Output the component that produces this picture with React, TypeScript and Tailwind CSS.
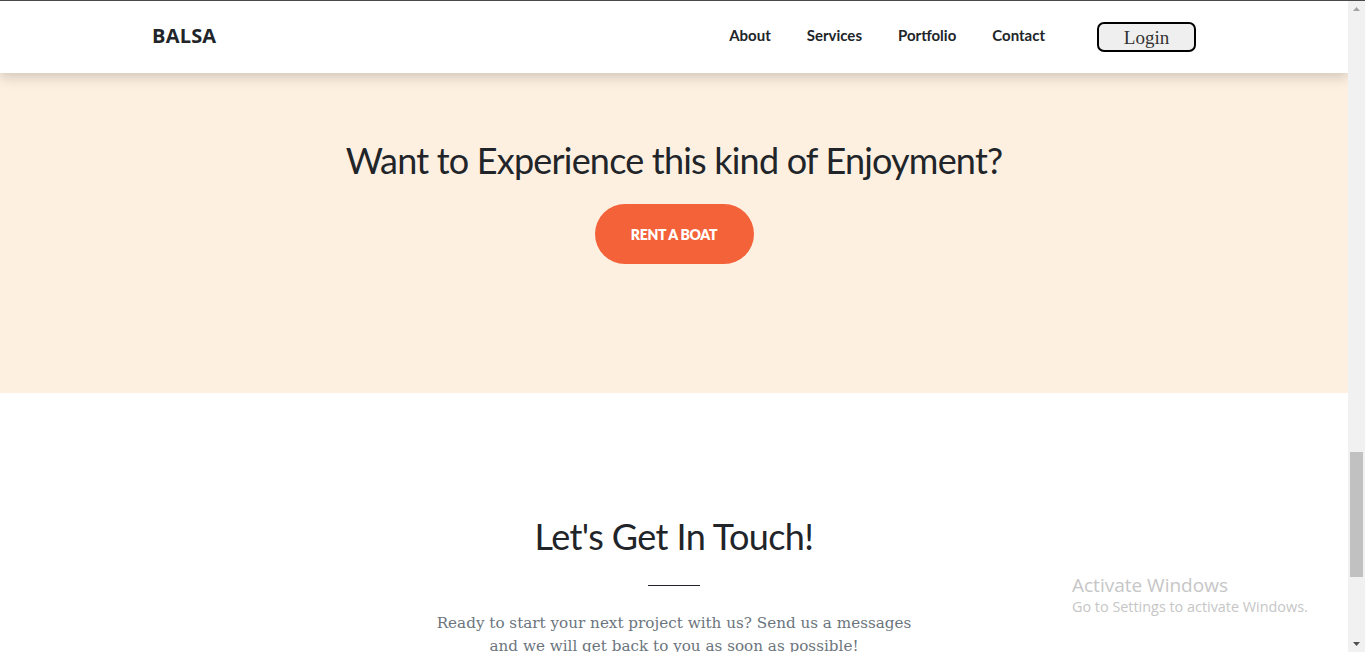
import React from 'react';

const NAV_LINKS = ['About', 'Services', 'Portfolio', 'Contact'];

const Scrollbar: React.FC = () => (
  <div className="w-[17px] shrink-0 bg-[#f1f1f1] flex flex-col items-center">
    <svg width="17" height="17" viewBox="0 0 17 17" className="shrink-0">
      <path d="M5 10 L8.5 6 L12 10 Z" fill="#a3a3a3" />
    </svg>
    <div className="flex-1 w-full flex flex-col items-center">
      <div className="h-[434px]" />
      <div className="w-[13px] h-[125px] bg-[#c1c1c1]" />
    </div>
    <svg width="17" height="17" viewBox="0 0 17 17" className="shrink-0">
      <path d="M5 7 L12 7 L8.5 11 Z" fill="#505050" />
    </svg>
  </div>
);

const App: React.FC = () => {
  return (
    <div className="h-[652px] w-full flex flex-col overflow-hidden border-t border-[#4a4a4a] bg-white relative">
      <div className="flex flex-1 min-h-0">
        <div className="flex-1 flex flex-col min-w-0 overflow-hidden">
          {/* Navbar */}
          <nav className="h-[72px] shrink-0 bg-white flex items-center justify-between px-[152px] relative z-10 shadow-[0_4px_12px_rgba(0,0,0,0.18)]">
            <span className="-mt-[2px] font-['Open_Sans',sans-serif] font-bold text-[20px] text-[#212529] tracking-[0.2px]">BALSA</span>
            <div className="flex items-center">
              <ul className="-mt-[4px] flex items-center gap-[36px] font-['Lato',sans-serif] font-bold text-[15px] text-[#212529]">
                {NAV_LINKS.map((l) => (
                  <li key={l}>{l}</li>
                ))}
              </ul>
              <button className="ml-[52px] w-[99px] h-[30px] rounded-[7px] border-2 border-black bg-[#efefef] font-['Liberation_Serif',serif] text-[19px] text-[#333] leading-none">
                Login
              </button>
            </div>
          </nav>

          {/* CTA */}
          <section className="h-[320px] shrink-0 bg-[#fdf0e1] flex flex-col items-center pt-[66px]">
            <h2 className="font-['Lato',sans-serif] text-[36px] leading-[1.2] tracking-[-0.8px] text-[#212529]">
              Want to Experience this kind of Enjoyment?
            </h2>
            <button className="mt-[22px] w-[159px] h-[60px] rounded-full bg-[#f4623a] text-white font-['Lato',sans-serif] font-extrabold text-[14px] tracking-[-0.3px]">
              RENT A BOAT
            </button>
          </section>

          {/* Contact */}
          <section className="flex-1 bg-white flex flex-col items-center pt-[122px]">
            <h2 className="font-['Lato',sans-serif] text-[36px] leading-[1.2] tracking-[-0.6px] text-[#212529]">
              Let's Get In Touch!
            </h2>
            <hr className="mt-[27px] w-[52px] border-0 border-t-[1.5px] border-[#212529]" />
            <p className="mt-[26px] w-[500px] text-center font-['DejaVu_Serif',serif] text-[15.2px] leading-[23px] text-[#6c757d]">
              Ready to start your next project with us? Send us a messages and we will get back to you as soon as possible!
            </p>
          </section>
        </div>
        <Scrollbar />
      </div>

      {/* Windows watermark */}
      <div className="absolute left-[1072px] top-[572px] font-['Open_Sans',sans-serif] text-[#c6c6c6] pointer-events-none">
        <div className="text-[19px] leading-[24px]">Activate Windows</div>
        <div className="text-[14.4px] leading-[20px]">Go to Settings to activate Windows.</div>
      </div>
    </div>
  );
};

export default App;
